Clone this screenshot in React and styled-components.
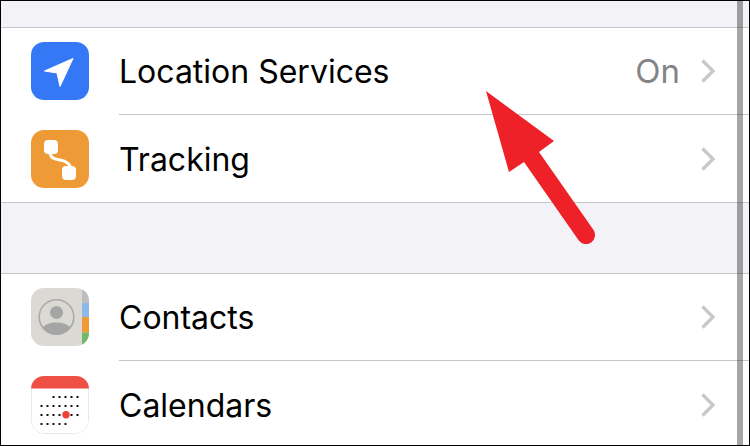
import React from "react";
import styled, { createGlobalStyle } from "styled-components";

const Global = createGlobalStyle`
  html, body {
    margin: 0;
    padding: 0;
    background: #fff;
  }
`;

const Screen = styled.div`
  position: relative;
  box-sizing: border-box;
  width: 750px;
  height: 446px;
  overflow: hidden;
  padding-top: 26px;
  border: 1px solid #000;
  background: #f2f2f7;
  font-family: Inter, "Liberation Sans", sans-serif;
`;

const Group = styled.div`
  background: #fff;
  border-top: 1px solid #c6c6c8;
  border-bottom: ${(p) => (p.$open ? "none" : "1px solid #c6c6c8")};
  margin-bottom: 70px;
`;

const Row = styled.div`
  display: flex;
  align-items: center;
  padding: 14px 0 14px 30px;
`;

const Divider = styled.div`
  height: 1px;
  margin-left: 118px;
  background: #c6c6c8;
  & + ${Row} {
    padding-top: 15px;
  }
`;

const Tile = styled.div`
  flex: none;
  width: 58px;
  height: 58px;
  border-radius: 13px;
  overflow: hidden;
  background: ${(p) => p.$bg};
  svg {
    display: block;
  }
`;

const Label = styled.span`
  flex: 1;
  margin-left: 30px;
  font-size: 32px;
  color: #000;
`;

const Value = styled.span`
  margin-right: 20px;
  font-size: 33px;
  color: #838388;
`;

const Chevron = styled.svg`
  flex: none;
  width: 16px;
  height: 26px;
  margin-right: 33px;
`;

const Scrollbar = styled.div`
  position: absolute;
  top: 0;
  bottom: 0;
  left: 736px;
  width: 6px;
  background: rgba(0, 0, 0, 0.35);
`;

const Arrow = styled.svg`
  position: absolute;
  left: 479px;
  top: 84px;
`;

const More = () => (
  <Chevron viewBox="0 0 16 26">
    <path d="M2.500 2.500 13 13 2.500 23.500" fill="none" stroke="#c7c7cc" strokeWidth="3.2" />
  </Chevron>
);

// calendar grid, dots by column index per row
const calendarRows = [
  { y: 20, cols: [2, 3, 4, 5, 6] },
  { y: 29, cols: [0, 1, 2, 3, 4, 5, 6] },
  { y: 38, cols: [0, 1, 2, 3, 5, 6] },
  { y: 47, cols: [0, 1, 2, 3, 4] },
];

function CalendarIcon() {
  return (
    <svg width="58" height="58" viewBox="0 0 58 58">
      <rect x="0.5" y="0.5" width="57" height="57" rx="13" fill="#fff" stroke="#d4d4d4" strokeDasharray="1 1" />
      <rect width="58" height="12.500" fill="#ef5044" />
      {calendarRows.map((row) =>
        row.cols.map((c) => (
          <rect key={`${row.y}-${c}`} x={9.5 + c * 6} y={row.y} width="2" height="2" fill="#111" />
        ))
      )}
      <circle cx="35" cy="38.700" r="3.700" fill="#ef4136" />
    </svg>
  );
}

export default function App() {
  return (
    <Screen>
      <Global />
      <Group>
        <Row>
          <Tile $bg="#3478f6">
            <svg width="58" height="58" viewBox="0 0 58 58">
              <path d="M42 16.500 13.500 29 26 31l3 13.500z" fill="#fff" stroke="#fff" strokeWidth="1" strokeLinejoin="round" />
            </svg>
          </Tile>
          <Label>Location Services</Label>
          <Value>On</Value>
          <More />
        </Row>
        <Divider />
        <Row>
          <Tile $bg="#ee9b37">
            <svg width="58" height="58" viewBox="0 0 58 58">
              <path d="M19 23C20 31 30 29 35 32c3 1.500 4 3 5 6" fill="none" stroke="#fff" strokeWidth="3" />
              <rect x="13" y="10" width="14" height="14" rx="4" fill="#fff" />
              <rect x="31" y="36" width="14" height="14" rx="4" fill="#fff" />
            </svg>
          </Tile>
          <Label>Tracking</Label>
          <More />
        </Row>
      </Group>
      <Group $open>
        <Row>
          <Tile $bg="#dbd9d3">
            <svg width="58" height="58" viewBox="0 0 58 58">
              <rect x="51" y="0" width="7" height="15" fill="#bdbdbf" />
              <rect x="51" y="15" width="7" height="14" fill="#8db8ea" />
              <rect x="51" y="29" width="7" height="15.500" fill="#ee9b37" />
              <rect x="51" y="44.500" width="7" height="13.500" fill="#70b96a" />
              <circle cx="25.500" cy="29" r="17.300" fill="none" stroke="#a9a9a9" strokeWidth="1.600" />
              <circle cx="25.500" cy="24.500" r="6.500" fill="#a5a5a5" />
              <path d="M11.500 40c3-4 8-5.500 14-5.500s11 1.500 14 5.500c-3.500 4-8.500 6.500-14 6.500s-10.500-2.500-14-6.500z" fill="#a5a5a5" />
            </svg>
          </Tile>
          <Label>Contacts</Label>
          <More />
        </Row>
        <Divider />
        <Row>
          <Tile $bg="#fff">
            <CalendarIcon />
          </Tile>
          <Label>Calendars</Label>
          <More />
        </Row>
      </Group>
      <Scrollbar />
      <Arrow width="125" height="170" viewBox="0 0 125 170">
        <path d="M6 6 74 56 59 67 113.400 144.800A9 9 0 0 1 98.600 155.200L44 77 29 87z" fill="#ee2028" />
      </Arrow>
    </Screen>
  );
}
